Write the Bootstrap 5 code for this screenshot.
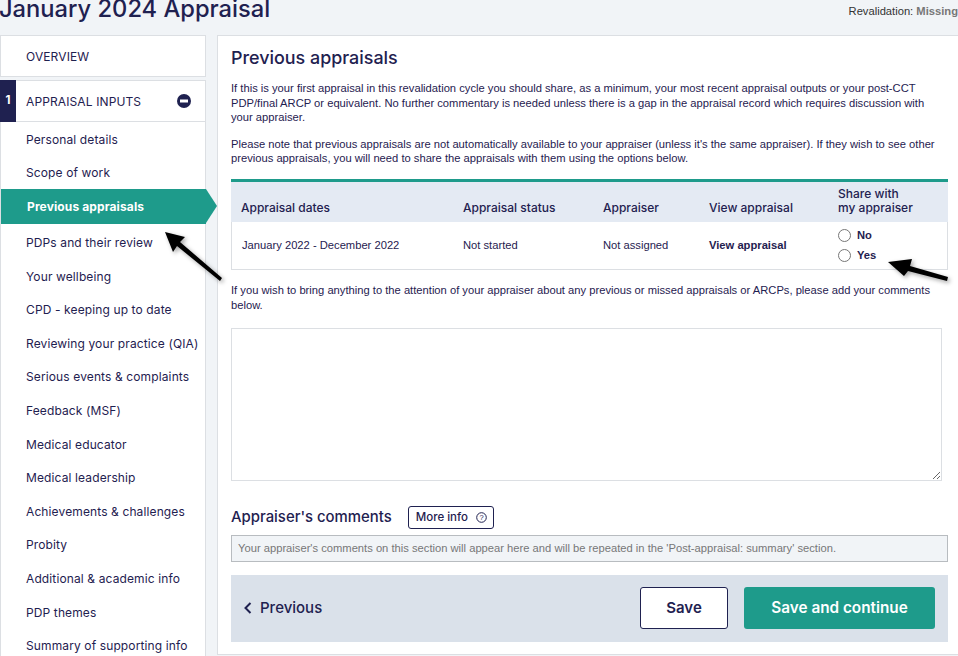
<!doctype html>
<html lang="en">
<head>
<meta charset="utf-8">
<title>January 2024 Appraisal</title>
<link href="https://cdn.jsdelivr.net/npm/bootstrap@5.3.0/dist/css/bootstrap.min.css" rel="stylesheet">
<style>
:root{--ink:#1f2150;--teal:#1e9b8b;--line:#dcdfe3;}
html,body{height:656px;overflow:hidden;}
body{background:#f1f4f7;color:var(--ink);font-family:"Liberation Sans",Arial,sans-serif;font-size:11.2px;position:relative;}
.disp{font-family:Inter,"Open Sans",sans-serif;}
.page-head{height:35px;}
.page-title{font-size:23.7px;font-weight:500;line-height:1;margin:-3px 0 0 -1px;white-space:nowrap;color:var(--ink);}
.reval{font-size:11.2px;color:#333;padding-top:4px;line-height:14px;white-space:nowrap;}
.reval b{color:#777;}
.shell{gap:11px;}
.side{width:206px;flex:none;}
.side-box{background:#fff;border:1px solid var(--line);font-size:12px;letter-spacing:.12px;}
.side-top{height:42px;padding:2px 0 0 25px;}
.side-sec{height:42px;margin-top:3px;border-left:0;}
.side-num{width:16px;height:42px;margin-top:-1px;background:var(--ink);color:#fff;font-weight:700;font-size:11.5px;}
.side-lbl{margin-left:10px;padding-top:2px;}
.side-list{border-top:0;padding:0;}
.side-item{height:33.6px;padding:2px 0 0 25px;white-space:nowrap;}
.side-item.on{background:var(--teal);color:#fff;font-weight:700;margin-right:-1px;padding-left:26px;padding-top:0;height:35px;margin-bottom:1px;position:relative;}
.side-item.on::after{content:"";position:absolute;left:100%;top:0;border-left:11px solid var(--teal);border-top:17.5px solid transparent;border-bottom:17.5px solid transparent;}
.panel{background:#fff;border:1px solid var(--line);border-right:0;height:620px;padding:0 10px 0 13px;flex:1;min-width:0;}
.panel h2{font-size:17.9px;font-weight:500;margin:12px 0 13px;line-height:20px;color:var(--ink);}
.copy{line-height:14.6px;margin:0 0 12px;padding-right:2px;}
.tbl{width:717px;margin:0;margin-top:13px;border-collapse:separate;border-spacing:0;table-layout:fixed;}
.tbl th{background:#e4eaf3;font-family:Inter,sans-serif;font-weight:500;font-size:12px;line-height:14.5px;vertical-align:bottom;padding:0 0 6px 10px;height:43px;color:var(--ink);border-top:3px solid var(--teal);}
.tbl td{vertical-align:middle;padding:0 0 0 10px;height:48px;background:#fff;color:var(--ink);border-bottom:1px solid var(--line);}
.tbl td:first-child{border-left:1px solid var(--line);}
.tbl td:last-child{border-right:1px solid var(--line);}
.pick{display:flex;align-items:center;gap:6px;font-weight:700;line-height:20px;}
.pick i{display:block;width:13px;height:13px;border:1px solid #777;border-radius:50%;background:#fff;}
.after{margin:13px 0 0;line-height:15px;padding-right:10px;}
.memo{display:block;width:711px;height:153px;margin-top:15px;border:1px solid var(--line);border-radius:0;background:#fff;}
.sub-h{font-size:14.9px;font-weight:500;margin:0;color:var(--ink);}
.more{font-size:11.5px;border:1px solid var(--ink);border-radius:3px;background:#fff;color:var(--ink);padding:0 6px 0 7px;height:23px;font-family:Inter,sans-serif;font-weight:500;}
.note{width:717px;height:27px;margin-top:6px;background:#f1f4f7;border:1px solid #b8bcc0;color:#777;padding-left:6px;}
.bar{width:717px;height:67px;margin-top:13px;background:#dae1ea;padding:0 13px;}
.prev{font-size:15px;font-weight:500;color:var(--ink);}
.save{width:88px;height:42px;background:#fff;border:1px solid var(--ink);border-radius:3px;font-size:15px;font-weight:600;color:var(--ink);padding:0;}
.go{width:191px;height:42px;background:var(--teal);border:0;border-radius:3px;font-size:15.3px;font-weight:600;color:#fff;padding:0;}
.pointer{position:absolute;pointer-events:none;filter:drop-shadow(2px 2px 2px rgba(0,0,0,.35));}
</style>
</head>
<body>
<header class="page-head d-flex justify-content-between">
  <h1 class="page-title disp">January 2024 Appraisal</h1>
  <div class="reval">Revalidation:&nbsp;<b>Missing</b></div>
</header>
<div class="shell d-flex">
  <nav class="side disp">
    <div class="side-box side-top d-flex align-items-center">OVERVIEW</div>
    <div class="side-box side-sec d-flex align-items-center">
      <span class="side-num d-flex align-items-center justify-content-center">1</span>
      <span class="side-lbl flex-grow-1">APPRAISAL INPUTS</span>
      <svg class="sign" style="margin-right:14px" width="14" height="14" viewBox="0 0 14 14"><circle cx="7" cy="7" r="7" fill="#1f2150"/><rect x="3" y="5.5" width="8" height="3" fill="#fff"/></svg>
    </div>
    <div class="side-box side-list">
      <div class="side-item d-flex align-items-center">Personal details</div>
      <div class="side-item d-flex align-items-center">Scope of work</div>
      <div class="side-item on d-flex align-items-center">Previous appraisals</div>
      <div class="side-item d-flex align-items-center">PDPs and their review</div>
      <div class="side-item d-flex align-items-center">Your wellbeing</div>
      <div class="side-item d-flex align-items-center">CPD - keeping up to date</div>
      <div class="side-item d-flex align-items-center">Reviewing your practice (QIA)</div>
      <div class="side-item d-flex align-items-center">Serious events &amp; complaints</div>
      <div class="side-item d-flex align-items-center">Feedback (MSF)</div>
      <div class="side-item d-flex align-items-center">Medical educator</div>
      <div class="side-item d-flex align-items-center">Medical leadership</div>
      <div class="side-item d-flex align-items-center">Achievements &amp; challenges</div>
      <div class="side-item d-flex align-items-center">Probity</div>
      <div class="side-item d-flex align-items-center">Additional &amp; academic info</div>
      <div class="side-item d-flex align-items-center">PDP themes</div>
      <div class="side-item d-flex align-items-center">Summary of supporting info</div>
    </div>
  </nav>
  <main class="panel">
    <h2 class="disp">Previous appraisals</h2>
    <p class="copy">If this is your first appraisal in this revalidation cycle you should share, as a minimum, your most recent appraisal outputs or your post-CCT PDP/final ARCP or equivalent. No further commentary is needed unless there is a gap in the appraisal record which requires discussion with your appraiser.</p>
    <p class="copy m-0">Please note that previous appraisals are not automatically available to your appraiser (unless it's the same appraiser). If they wish to see other previous appraisals, you will need to share the appraisals with them using the options below.</p>
    <table class="tbl">
      <colgroup><col style="width:222px"><col style="width:140px"><col style="width:106px"><col style="width:129px"><col style="width:120px"></colgroup>
      <thead><tr><th>Appraisal dates</th><th>Appraisal status</th><th>Appraiser</th><th>View appraisal</th><th>Share with<br>my appraiser</th></tr></thead>
      <tbody><tr>
        <td>January 2022 - December 2022</td><td>Not started</td><td>Not assigned</td><td><b>View appraisal</b></td>
        <td><div class="pick"><i></i>No</div><div class="pick"><i></i>Yes</div></td>
      </tr></tbody>
    </table>
    <p class="after">If you wish to bring anything to the attention of your appraiser about any previous or missed appraisals or ARCPs, please add your comments below.</p>
    <textarea class="memo form-control" aria-label="Comments"></textarea>
    <div class="d-flex align-items-center gap-3 disp" style="margin-top:25px">
      <h3 class="sub-h disp">Appraiser's comments</h3>
      <button class="more d-flex align-items-center gap-2" type="button">More info
        <svg width="11" height="11" viewBox="0 0 11 11"><circle cx="5.5" cy="5.5" r="4.8" fill="none" stroke="#1f2150"/><text x="5.5" y="8.2" font-size="7.5" font-family="Liberation Sans" text-anchor="middle" fill="#1f2150">?</text></svg>
      </button>
    </div>
    <div class="note d-flex align-items-center">Your appraiser's comments on this section will appear here and will be repeated in the 'Post-appraisal: summary' section.</div>
    <div class="bar d-flex align-items-center disp">
      <div class="prev d-flex align-items-center gap-2 flex-grow-1">
        <svg width="8" height="12" viewBox="0 0 8 12"><path d="M6.5 1 1.5 6l5 5" fill="none" stroke="#1f2150" stroke-width="2"/></svg>Previous
      </div>
      <button class="save disp me-3" type="button">Save</button>
      <button class="go disp" type="button">Save and continue</button>
    </div>
  </main>
</div>
<svg class="pointer" style="left:160px;top:226px" width="66" height="58" viewBox="0 0 66 58"><path d="M5 6 25 11 20 16 62 52 60 55 17 20 13 26Z" fill="#000"/></svg>
<svg class="pointer" style="left:884px;top:256px" width="68" height="30" viewBox="0 0 68 30"><path d="M4 6 28 3 26 10 64 21 63 25 24 15 20 20Z" fill="#000"/></svg>
</body>
</html>
